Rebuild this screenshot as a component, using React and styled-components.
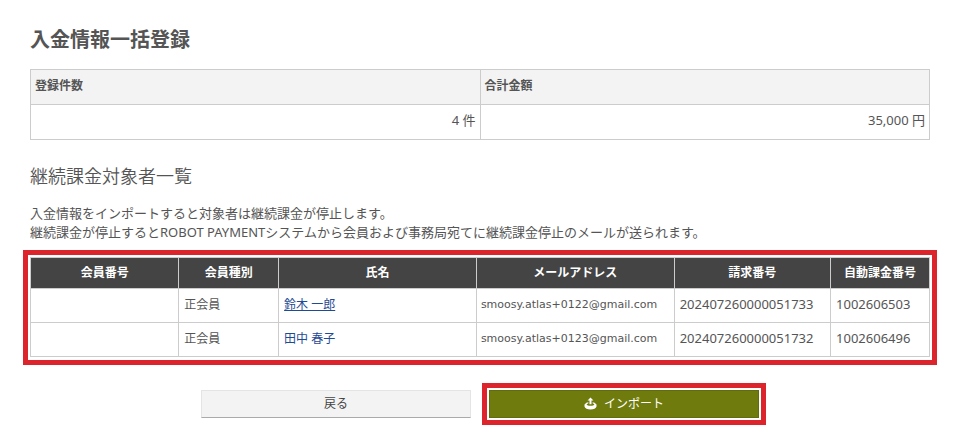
import React from "react";
import styled, { createGlobalStyle } from "styled-components";

const GlobalStyle = createGlobalStyle`
  * {
    box-sizing: border-box;
  }

  body {
    margin: 0;
    background-color: #fff;
    color: #555;
    font-family: "Noto Sans", "Noto Sans CJK JP", sans-serif;
    font-size: 13px;
    line-height: 19px;
  }
`;

const Page = styled.main`
  padding: 25px 31px 16px 30px;
`;

const Title = styled.h1`
  margin: 0 0 14px;
  font-size: 20px;
  line-height: 30px;
  font-weight: 700;
`;

const SubTitle = styled.h2`
  margin: 22px 0 14px;
  font-size: 18px;
  line-height: 28px;
  font-weight: 350;
`;

const Notice = styled.p`
  margin: 0 0 15px;
`;

const Table = styled.table`
  width: 100%;
  table-layout: fixed;
  border-collapse: collapse;
`;

const SummaryHeader = styled.th`
  height: 35px;
  padding: 0 4px 3px;
  background-color: #f3f3f3;
  border: 1px solid #ccc;
  font-size: 12px;
  text-align: left;
`;

const SummaryCell = styled.td`
  height: 35px;
  padding: 0 4px 3px;
  border: 1px solid #ccc;
  text-align: right;
`;

const Frame = styled.div`
  padding-bottom: 1px;
  outline: 5px solid #dc242c;
  outline-offset: 2px;
`;

const Col = styled.col`
  width: ${({ $width }) => $width};
`;

const MemberHeader = styled.th`
  height: 31px;
  padding: 0 5px 2px;
  background-color: #444;
  border: 1px solid #ccc;
  color: #fff;
  font-size: 12px;
`;

const MemberCell = styled.td`
  height: 34px;
  padding: 0 5px 2px;
  border: 1px solid #ccc;
  font-size: ${({ $size }) => $size || "12px"};
  white-space: nowrap;

  &.mail {
    padding: 0 4px 2px;
    font-family: "DejaVu Sans", sans-serif;
  }
`;

const MemberLink = styled.a`
  color: #1f4a94;
  text-decoration: ${({ $underline }) => ($underline ? "underline" : "none")};
`;

const Actions = styled.div`
  display: flex;
  justify-content: center;
  gap: 18px;
  margin-top: 32px;
`;

const BaseBtn = styled.button`
  display: flex;
  justify-content: center;
  align-items: center;
  gap: 7px;
  width: 270px;
  height: 28px;
  padding: 0 0 2px;
  border-radius: 0;
  font-family: inherit;
  font-size: 12px;
  cursor: pointer;
`;

const BackBtn = styled(BaseBtn)`
  background-color: #f3f3f3;
  border: 1px solid #e4e4e4;
  border-bottom-color: #aaa;
  color: #444;
`;

const ImportBtn = styled(BaseBtn)`
  background-color: #707b0e;
  border: 1px solid #626c0c;
  color: #fff;
  outline: 5px solid #dc242c;
  outline-offset: 2px;
`;

const members = [
  {
    type: "正会員",
    name: "鈴木 一郎",
    mail: "smoosy.atlas+0122@gmail.com",
    invoice: "202407260000051733",
    billing: "1002606503",
    underline: true,
  },
  {
    type: "正会員",
    name: "田中 春子",
    mail: "smoosy.atlas+0123@gmail.com",
    invoice: "202407260000051732",
    billing: "1002606496",
    underline: false,
  },
];

const ImportIcon = () => (
  <svg width="13" height="13" viewBox="0 0 13 13" aria-hidden="true">
    <path d="M6.5 0.5 L9.5 3.6 H7.5 V7.3 H5.5 V3.6 H3.5 Z" fill="#fff" />
    <path
      fillRule="evenodd"
      fill="#fff"
      d="M4.4 5.2 L2.4 5.8 L0.5 7.4 V9.4 C1 11.2 3.3 12.5 6.5 12.5 S12 11.2 12.5 9.4 V7.4 L10.6 5.8 L8.6 5.2 V6.2 L10.4 7.2 C10 8.2 8.6 8.7 6.5 8.7 S3 8.2 2.6 7.2 L4.4 6.2 Z"
    />
  </svg>
);

const App = () => {
  return (
    <>
      <GlobalStyle />
      <Page>
        <Title>入金情報一括登録</Title>
        <Table>
          <thead>
            <tr>
              <SummaryHeader>登録件数</SummaryHeader>
              <SummaryHeader>合計金額</SummaryHeader>
            </tr>
          </thead>
          <tbody>
            <tr>
              <SummaryCell>4 件</SummaryCell>
              <SummaryCell>35,000 円</SummaryCell>
            </tr>
          </tbody>
        </Table>

        <SubTitle>継続課金対象者一覧</SubTitle>
        <Notice>
          入金情報をインポートすると対象者は継続課金が停止します。
          <br />
          継続課金が停止するとROBOT
          PAYMENTシステムから会員および事務局宛てに継続課金停止のメールが送られます。
        </Notice>

        <Frame>
          <Table>
            <colgroup>
              <Col $width="16.5%" />
              <Col $width="11.1%" />
              <Col $width="22%" />
              <Col $width="22%" />
              <Col $width="17.4%" />
              <Col $width="11%" />
            </colgroup>
            <thead>
              <tr>
                <MemberHeader>会員番号</MemberHeader>
                <MemberHeader>会員種別</MemberHeader>
                <MemberHeader>氏名</MemberHeader>
                <MemberHeader>メールアドレス</MemberHeader>
                <MemberHeader>請求番号</MemberHeader>
                <MemberHeader>自動課金番号</MemberHeader>
              </tr>
            </thead>
            <tbody>
              {members.map((member) => (
                <tr key={member.billing}>
                  <MemberCell />
                  <MemberCell>{member.type}</MemberCell>
                  <MemberCell>
                    <MemberLink href="#" $underline={member.underline}>
                      {member.name}
                    </MemberLink>
                  </MemberCell>
                  <MemberCell className="mail" $size="11px">
                    {member.mail}
                  </MemberCell>
                  <MemberCell $size="13px">{member.invoice}</MemberCell>
                  <MemberCell $size="13px">{member.billing}</MemberCell>
                </tr>
              ))}
            </tbody>
          </Table>
        </Frame>

        <Actions>
          <BackBtn type="button">戻る</BackBtn>
          <ImportBtn type="button">
            <ImportIcon />
            インポート
          </ImportBtn>
        </Actions>
      </Page>
    </>
  );
};

export default App;
